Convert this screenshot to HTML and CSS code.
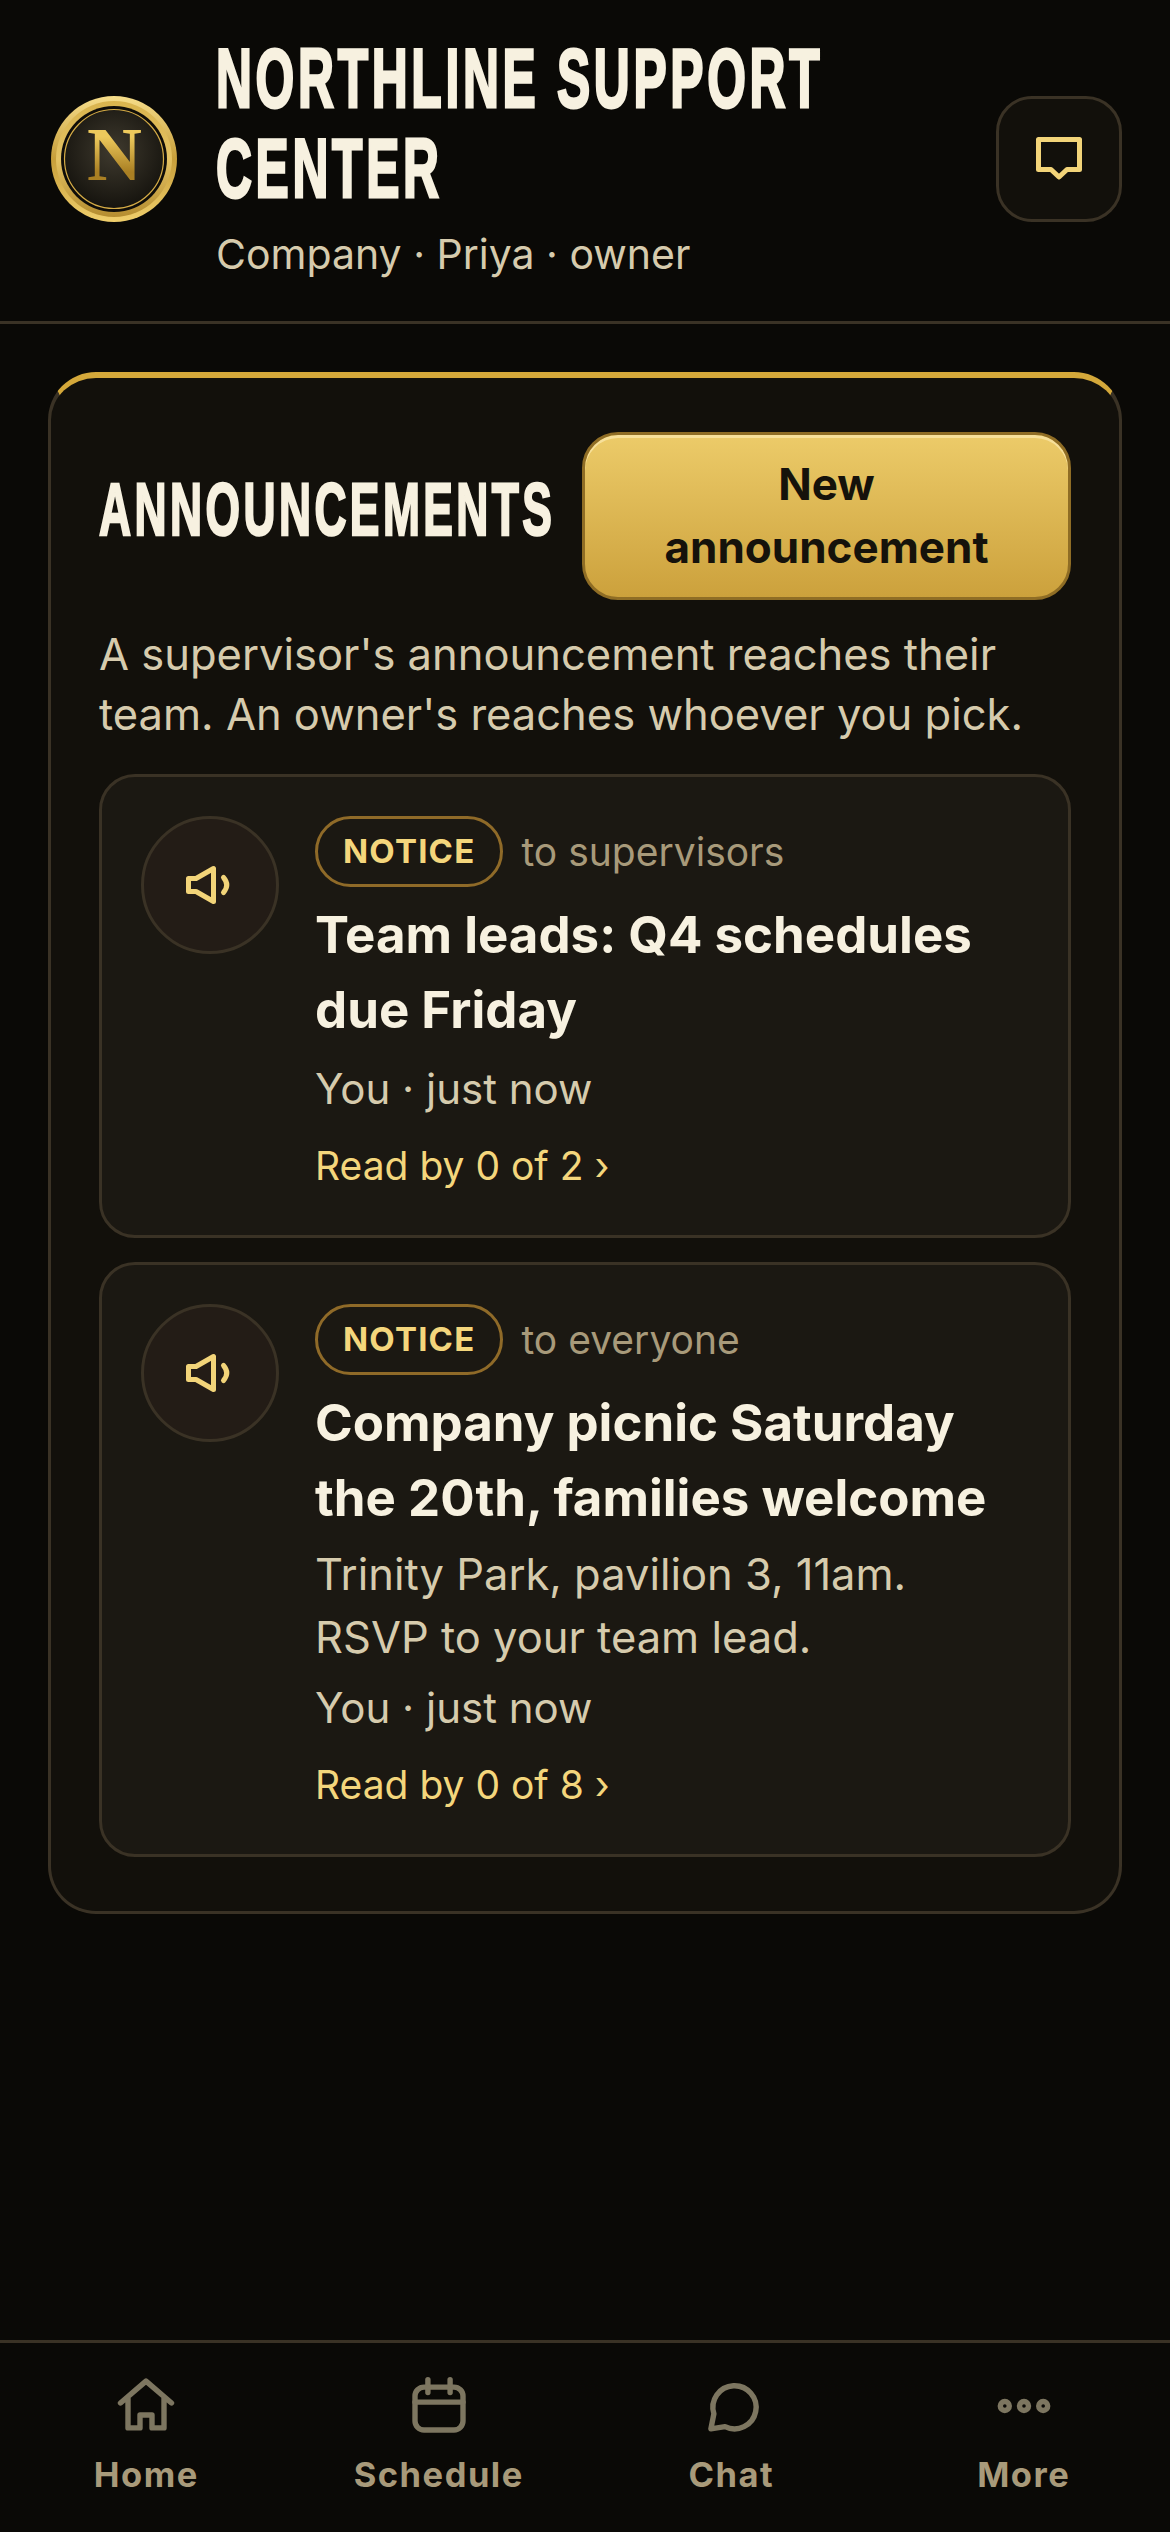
FILE: index.html
```html
<!DOCTYPE html>
<html lang="en">
<head>
  <meta charset="UTF-8">
  <meta name="viewport" content="width=device-width, initial-scale=1.0">
  <title>Northline Support Center</title>
  <link rel="stylesheet" href="styles.css">
</head>
<body>

  <header class="topbar">
    <svg class="coin" viewBox="0 0 132 132">
      <defs>
        <linearGradient id="ringGold" x1="0" y1="0" x2="0" y2="1">
          <stop offset="0" stop-color="#f6dd8a"/>
          <stop offset="0.5" stop-color="#c79e3a"/>
          <stop offset="1" stop-color="#f0cf6c"/>
        </linearGradient>
        <linearGradient id="ringInner" x1="0" y1="0" x2="0" y2="1">
          <stop offset="0" stop-color="#d9b44e"/>
          <stop offset="0.5" stop-color="#e4c263"/>
          <stop offset="1" stop-color="#b58d30"/>
        </linearGradient>
        <radialGradient id="coinDark" cx="0.5" cy="0.42" r="0.6">
          <stop offset="0" stop-color="#3f3a2e"/>
          <stop offset="1" stop-color="#14120d"/>
        </radialGradient>
        <linearGradient id="letterGold" x1="0" y1="0" x2="0" y2="1">
          <stop offset="0.3" stop-color="#edc95c"/>
          <stop offset="0.72" stop-color="#a97f23"/>
        </linearGradient>
      </defs>
      <circle cx="66" cy="66" r="63" fill="url(#ringGold)"/>
      <circle cx="66" cy="66" r="58" fill="url(#ringInner)"/>
      <circle cx="66" cy="66" r="53" fill="#0f0d09"/>
      <circle cx="66" cy="66" r="49.5" fill="url(#coinDark)" stroke="#d4ab46" stroke-width="1.2"/>
      <text class="coin-letter" x="66.500" y="86.500" text-anchor="middle" fill="url(#letterGold)">N</text>
    </svg>
    <div class="brand">
      <h1><span>NORTHLINE SUPPORT</span> <span>CENTER</span></h1>
      <p>Company · Priya · owner</p>
    </div>
    <button class="msg-btn">
      <svg viewBox="0 0 60 60"><path d="M9.5 10.5H50.5V40.5H38L30 48L22 40.5H9.5Z"/></svg>
    </button>
  </header>

  <main class="content">
    <section class="panel">
      <div class="panel-head">
        <h2>ANNOUNCEMENTS</h2>
        <button class="new-btn">New announcement</button>
      </div>
      <p class="panel-desc">A supervisor's announcement reaches their team. An owner's reaches whoever you pick.</p>

      <article class="notice">
        <div class="notice-icon">
          <svg viewBox="0 0 60 60"><path d="M8.5 23.5H16L33.500 13.500V46.500L16 36.500H8.500Z"/><path d="M43.500 22.500Q50 30 43.500 37.500"/></svg>
        </div>
        <div class="notice-body">
          <div class="notice-top"><span class="tag">NOTICE</span><span class="audience">to supervisors</span></div>
          <h3>Team leads: Q4 schedules due Friday</h3>
          <p class="meta">You · just now</p>
          <a class="reads">Read by 0 of 2 ›</a>
        </div>
      </article>

      <article class="notice">
        <div class="notice-icon">
          <svg viewBox="0 0 60 60"><path d="M8.5 23.5H16L33.500 13.500V46.500L16 36.500H8.500Z"/><path d="M43.500 22.500Q50 30 43.500 37.500"/></svg>
        </div>
        <div class="notice-body">
          <div class="notice-top"><span class="tag">NOTICE</span><span class="audience">to everyone</span></div>
          <h3>Company picnic Saturday the 20th, families welcome</h3>
          <p class="notice-text">Trinity Park, pavilion 3, 11am. RSVP to your team lead.</p>
          <p class="meta">You · just now</p>
          <a class="reads">Read by 0 of 8 ›</a>
        </div>
      </article>
    </section>
  </main>

  <nav class="tabbar">
    <a class="tab">
      <svg viewBox="0 0 24 24"><path d="M3.500 11L12 3.700L20.500 11M6 9.200V19.300H10V15H14V19.300H18V9.200"/></svg>
      <span>Home</span>
    </a>
    <a class="tab">
      <svg viewBox="0 0 24 24"><rect x="4" y="5.700" width="16" height="14.300" rx="3"/><path d="M4 10.700H20M8.300 3.200V7.500M15.700 3.200V7.500"/></svg>
      <span>Schedule</span>
    </a>
    <a class="tab">
      <svg viewBox="0 0 24 24"><path d="M5.300 19.600L6.300 14.600A7.200 7.200 0 1 1 10 18.900Z"/></svg>
      <span>Chat</span>
    </a>
    <a class="tab">
      <svg viewBox="0 0 24 24"><circle cx="5.600" cy="12" r="1.500"/><circle cx="12" cy="12" r="1.500"/><circle cx="18.400" cy="12" r="1.500"/></svg>
      <span>More</span>
    </a>
  </nav>

</body>
</html>
```

FILE: styles.css
```css
* {
  box-sizing: border-box;
}
body {
  font-family: Inter, "Liberation Sans", sans-serif;
  display: flex;
  flex-direction: column;
  height: 100vh;
  margin: 0;
  background: #0a0906;
  color: #f7f1e0;
}
h1, h2, h3, p {
  margin: 0;
}

.topbar {
  flex: none;
  display: flex;
  align-items: center;
  gap: 36px;
  height: 324px;
  padding: 0 48px 4px;
  border-bottom: 3px solid #3a3225;
}
.coin {
  flex: none;
  width: 132px;
  height: 132px;
}
.coin-letter {
  font-family: "Liberation Serif", serif;
  font-weight: 700;
  font-size: 76px;
}
.brand {
  flex: 1;
  min-width: 0;
}
/* no condensed face is installed, so the display titles are squeezed */
.brand h1 {
  font-size: 83px;
  font-family: "Liberation Sans", sans-serif;
  font-weight: 700;
  line-height: 90px;
  letter-spacing: 6.100px;
  -webkit-text-stroke: 3px #f7f1e0;
}
.brand h1 span {
  display: block;
  white-space: nowrap;
  transform-origin: left center;
  transform: scaleX(0.6);
}
.brand p {
  margin-top: 10px;
  font-size: 41px;
  line-height: 60px;
  color: #d6cbad;
}
.msg-btn {
  flex: none;
  width: 126px;
  height: 126px;
  padding: 0;
  display: flex;
  align-items: center;
  justify-content: center;
  background: #12100b;
  border: 3px solid #3a3225;
  border-radius: 36px;
}
.msg-btn svg {
  width: 60px;
  height: 60px;
  fill: none;
  stroke: #f2d479;
  stroke-width: 5;
  stroke-linejoin: round;
}

.content {
  flex: 1;
  padding: 48px 48px 0;
}
.panel {
  padding: 54px 48px;
  background: #12100b;
  border: 3px solid #3a3225;
  border-top: 6px solid #d4a83a;
  border-radius: 48px;
}
.panel-head {
  display: flex;
  align-items: center;
  justify-content: space-between;
}
.panel-head h2 {
  flex: none;
  width: 450px;
  margin-bottom: 12px;
  font-family: "Liberation Sans", sans-serif;
  font-size: 74px;
  font-weight: 700;
  line-height: 84px;
  letter-spacing: 5.700px;
  white-space: nowrap;
  -webkit-text-stroke: 2.500px #f7f1e0;
  transform-origin: left center;
  transform: scaleX(0.6);
}
.new-btn {
  flex: none;
  width: 489px;
  padding: 18px 48px;
  font-family: inherit;
  font-size: 44px;
  font-weight: 700;
  line-height: 63px;
  color: #15120b;
  background: linear-gradient(#eccb69, #cca13c);
  border: 3px solid #8f6d25;
  border-radius: 36px;
  box-shadow: inset 0 3px 0 #f7e09a;
}
.panel-desc {
  margin: 24px 0 30px;
  font-size: 43.500px;
  line-height: 60px;
  color: #d6cbad;
}

.notice {
  display: flex;
  gap: 36px;
  padding: 39px;
  margin-bottom: 24px;
  background: #1b1812;
  border: 3px solid #3a3225;
  border-radius: 36px;
}
.notice:last-child {
  margin-bottom: 0;
}
.notice-icon {
  flex: none;
  display: flex;
  align-items: center;
  justify-content: center;
  width: 138px;
  height: 138px;
  background: #231c16;
  border: 3px solid #3a3225;
  border-radius: 50%;
}
.notice-icon svg {
  width: 60px;
  height: 60px;
  fill: none;
  stroke: #f2d479;
  stroke-width: 5;
  stroke-linejoin: round;
  stroke-linecap: round;
}
.notice-body {
  flex: 1;
  min-width: 0;
}
.notice-top {
  display: flex;
  align-items: center;
  gap: 18px;
}
.tag {
  padding: 0 25px;
  font-size: 33px;
  font-weight: 700;
  line-height: 65px;
  letter-spacing: 1.200px;
  color: #f4d67c;
  border: 3px solid #8f6a28;
  border-radius: 36px;
}
.audience {
  font-size: 39px;
  color: #a89a7a;
}
.notice h3 {
  margin-top: 10px;
  font-size: 51px;
  font-weight: 700;
  line-height: 75px;
  color: #f7f1e0;
}
.notice-text {
  margin-top: 8px;
  font-size: 43.500px;
  line-height: 63px;
  color: #d6cbad;
}
.meta {
  margin-top: 10px;
  font-size: 42px;
  line-height: 63px;
  color: #d6cbad;
}
.notice-text + .meta {
  margin-top: 7px;
}
.reads {
  display: block;
  margin-top: 16px;
  font-size: 39px;
  line-height: 60px;
  color: #f4d67c;
}

.tabbar {
  flex: none;
  display: grid;
  grid-template-columns: repeat(4, 1fr);
  height: 192px;
  padding-top: 27px;
  border-top: 3px solid #3a3225;
}
.tab {
  display: flex;
  flex-direction: column;
  align-items: center;
  gap: 12px;
}
.tab svg {
  width: 72px;
  height: 72px;
  fill: none;
  stroke: #7d7660;
  stroke-width: 1.800;
  stroke-linecap: round;
  stroke-linejoin: round;
}
.tab span {
  font-size: 34.500px;
  font-weight: 700;
  line-height: 42px;
  letter-spacing: 1.500px;
  color: #a89a7a;
}
```
